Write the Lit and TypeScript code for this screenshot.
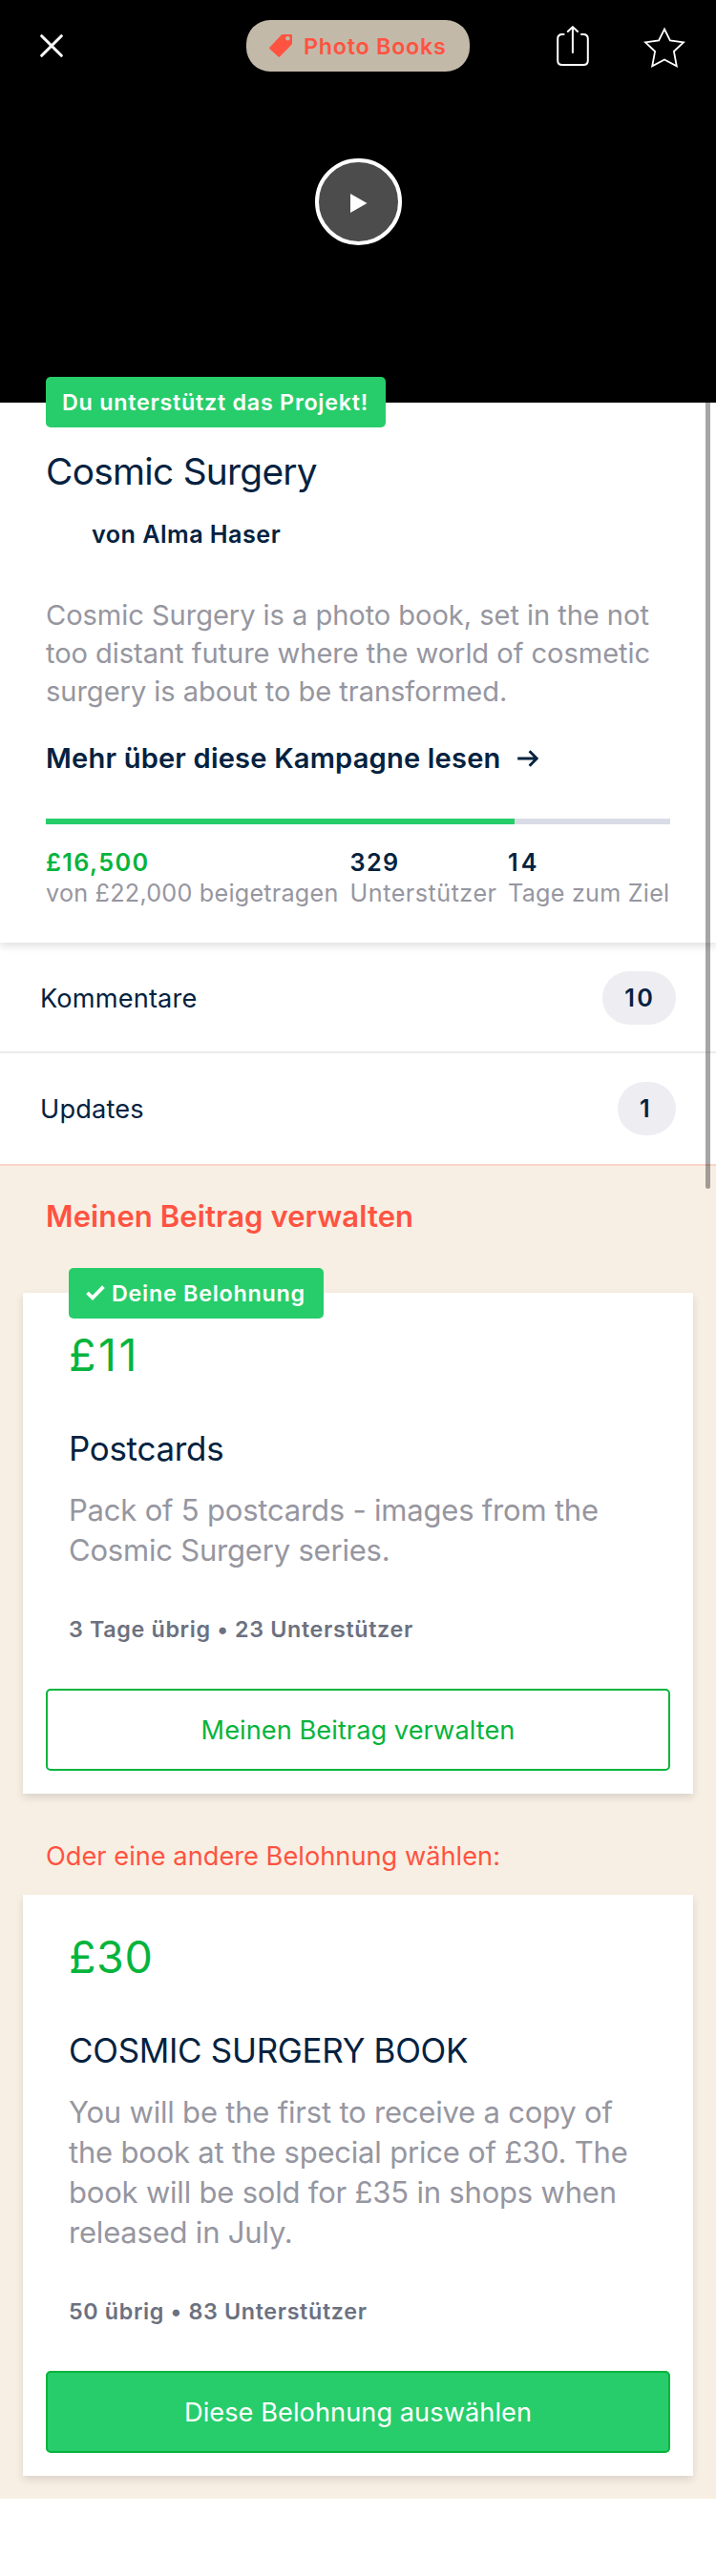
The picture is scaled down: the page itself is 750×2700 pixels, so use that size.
import { LitElement, html, css, svg, nothing } from "lit";
import { customElement, property } from "lit/decorators.js";
import { classMap } from "lit/directives/class-map.js";

const closeIcon = html`<svg class="icon" width="24" height="24" viewBox="0 0 24 24">
  ${svg`<path d="M1.7 1.7 22.3 22.3M22.3 1.7 1.7 22.3" fill="none" stroke="#fff" stroke-width="3" stroke-linecap="round" />`}
</svg>`;

const tagIcon = html`<svg class="icon" width="24" height="24" viewBox="0 0 24 24">
  ${svg`<path fill="#ff5341" fill-rule="evenodd"
    d="M14 .1H23a1 1 0 0 1 1 1V9.6q0 .7-.5 1.2L11 23.5q-.7.7-1.4 0L.4 15.2q-.7-.7 0-1.4L12.8.6Q13.3.1 14 .1ZM19.4 2a2.3 2.3 0 1 0 0 4.6 2.3 2.3 0 0 0 0-4.6Z" />`}
</svg>`;

const shareIcon = html`<svg class="icon" width="34" height="42" viewBox="0 0 34 42">
  ${svg`<g fill="none" stroke="#fff" stroke-width="2" stroke-linecap="round" stroke-linejoin="round">
    <path d="M7.6 9H6Q1.2 9 1.2 13.5V36.5Q1.2 41 6 41H28Q32.8 41 32.8 36.5V13.5Q32.8 9 28 9H26" />
    <path d="M16.9 28V1.2M11.8 6 16.9 1.1 22 6" />
  </g>`}
</svg>`;

const starIcon = html`<svg class="icon" width="44" height="44" viewBox="0 0 44 44">
  ${svg`<path fill="none" stroke="#fff" stroke-width="1.8"
    d="M22 3.5 27.9 15.5 42 17.4 31.9 26.9 34.8 42.3 22 35.4 9.2 42.3 12.1 26.9 2 17.4 16.1 15.5Z" />`}
</svg>`;

const arrowIcon = html`<svg class="arrow" width="22" height="18" viewBox="0 0 22 18">
  ${svg`<path d="M.2 9H20M12.6 1.2 20.3 9 12.6 16.8" fill="none" stroke="#042240" stroke-width="2.9" />`}
</svg>`;

const checkIcon = html`<svg class="icon" width="20" height="16" viewBox="0 0 20 16">
  ${svg`<path d="M1.5 8 7 13.3 18.4 1.7" fill="none" stroke="#fff" stroke-width="3.8" />`}
</svg>`;

interface Reward {
  price: string;
  narrowDigits?: boolean;
  title: string;
  lines: string[];
  meta: string;
  action: string;
  owned?: boolean;
}

const owned: Reward = {
  price: "£11",
  narrowDigits: true,
  title: "Postcards",
  lines: ["Pack of 5 postcards - images from the", "Cosmic Surgery series."],
  meta: "3 Tage übrig • 23 Unterstützer",
  action: "Meinen Beitrag verwalten",
  owned: true,
};

const alternative: Reward = {
  price: "£30",
  title: "COSMIC SURGERY BOOK",
  lines: [
    "You will be the first to receive a copy of",
    "the book at the special price of £30. The",
    "book will be sold for £35 in shops when",
    "released in July.",
  ],
  meta: "50 übrig • 83 Unterstützer",
  action: "Diese Belohnung auswählen",
};

const badgeStyles = css`
  .icon { display: block; flex: none; }
  .badge {
    display: inline-flex;
    align-items: center;
    height: 53px;
    padding: 0 18.5px 0 17px;
    box-sizing: border-box;
    border-radius: 5px;
    background: #27cd6a;
    color: #fff;
    font-size: 23.3px;
    font-weight: 600;
    letter-spacing: 0.75px;
    white-space: nowrap;
  }
`;

@customElement("reward-card")
class RewardCard extends LitElement {
  @property({ attribute: false }) reward!: Reward;

  static styles = [
    badgeStyles,
    css`
      :host { display: block; }
      .card {
        display: flex;
        flex-direction: column;
        background: #fff;
        padding: 37px 24px 24px;
        box-shadow: 0 4px 8px rgba(0, 0, 0, 0.12);
      }
      .card.owned { padding-top: 0; }
      .card .badge { align-self: flex-start; margin: -26px 0 10px 24px; gap: 7px; padding: 0 19px 0 18px; }
      .text { padding: 0 24px; white-space: nowrap; }
      .price { color: #05b43c; font-size: 46.6px; line-height: 56px; letter-spacing: 0.6px; }
      .price.narrow { letter-spacing: 2.5px; }
      .title { margin-top: 48.3px; font-size: 34.9px; line-height: 44px; letter-spacing: -0.27px; }
      .description { margin-top: 21.4px; font-size: 31px; line-height: 42px; letter-spacing: -0.2px; color: #9696a0; }
      .meta { margin-top: 47.5px; font-size: 23.3px; line-height: 30px; font-weight: 600; letter-spacing: 0.65px; color: #6b7180; }
      .action {
        margin: 46.8px 0 0;
        height: 86px;
        padding: 1px 0 0;
        box-sizing: border-box;
        border: 2px solid #05b43c;
        border-radius: 5px;
        background: #27cd6a;
        color: #fff;
        font: 400 27.2px Inter, "Liberation Sans", sans-serif;
        letter-spacing: 0.05px;
      }
      .owned .action { background: #fff; color: #05b43c; }
    `,
  ];

  render() {
    const r = this.reward;
    return html`<article class=${classMap({ card: true, owned: !!r.owned })}>
      ${r.owned ? html`<span class="badge">${checkIcon}<span>Deine Belohnung</span></span>` : nothing}
      <div class=${classMap({ text: true, price: true, narrow: !!r.narrowDigits })}>${r.price}</div>
      <div class="text title">${r.title}</div>
      <div class="text description">${r.lines.map((line) => html`<div>${line}</div>`)}</div>
      <div class="text meta">${r.meta}</div>
      <button class="action">${r.action}</button>
    </article>`;
  }
}

@customElement("app-root")
class AppRoot extends LitElement {
  static styles = [
    badgeStyles,
    css`
      :host {
        display: block;
        position: relative;
        min-height: 2700px;
        background: #fff;
        color: #042240;
        font-family: Inter, "Liberation Sans", sans-serif;
      }
      .hero { height: 422px; background: #000; display: flex; flex-direction: column; align-items: center; }
      .bar { width: 100%; height: 96px; display: grid; grid-template-columns: 258px 234px 258px; align-items: center; }
      .close { padding-left: 42px; }
      .category {
        display: flex;
        align-items: center;
        gap: 12px;
        height: 54px;
        padding-left: 24px;
        box-sizing: border-box;
        border-radius: 25px;
        background: #c3b9a9;
        color: #ff5341;
        font-size: 23.3px;
        font-weight: 600;
        letter-spacing: 0.75px;
        white-space: nowrap;
      }
      .actions { display: flex; justify-content: flex-end; align-items: center; gap: 57px; padding-right: 32px; }
      .actions .icon { margin-top: -1px; }
      .actions .icon:last-child { margin-top: 1px; }
      .play {
        display: flex;
        align-items: center;
        justify-content: center;
        width: 91px;
        height: 91px;
        margin-top: 70px;
        box-sizing: border-box;
        border: 4px solid #fff;
        border-radius: 50%;
        background: #4c4c4c;
      }
      .play svg { display: block; margin: 2px 0 0 2px; }
      .campaign { position: relative; padding: 0 48px 36px; box-shadow: 0 4px 8px rgba(0, 0, 0, 0.12); display: flex; flex-direction: column; white-space: nowrap; }
      .campaign .badge { align-self: flex-start; margin-top: -27px; }
      .name { margin-top: 21.6px; font-size: 38.8px; line-height: 48px; letter-spacing: -0.7px; }
      .author { margin: 26.2px 0 0 48px; font-size: 25.2px; line-height: 32px; font-weight: 600; letter-spacing: 0.45px; }
      .blurb { margin-top: 49.2px; font-size: 29.1px; line-height: 40px; letter-spacing: -0.06px; color: #9696a0; }
      .more { display: flex; align-items: center; gap: 17px; margin-top: 29.6px; font-size: 29.1px; line-height: 40px; font-weight: 600; letter-spacing: 0.18px; }
      .arrow { display: block; margin-top: 1px; }
      .track { height: 6px; margin-top: 43.4px; background: #d9dce6; }
      .fill { height: 6px; background: #27cd6a; }
      .stats { display: grid; grid-template-columns: 318.6px 165.5px auto; margin-top: 24px; font-size: 25.2px; line-height: 32px; }
      .value { font-weight: 600; letter-spacing: 1.4px; }
      .value.narrow { letter-spacing: 2.9px; }
      .value.raised { color: #05b43c; }
      .label { letter-spacing: 0.22px; color: #9696a0; }
      .label.wide { letter-spacing: 0.48px; }
      .row { display: flex; align-items: center; justify-content: space-between; height: 116px; padding: 0 42px; box-sizing: border-box; font-size: 27.2px; letter-spacing: 0.15px; }
      .row-label { padding-top: 1px; }
      .row:first-child { box-shadow: inset 0 -2px #ebebed; }
      .count {
        display: flex;
        align-items: center;
        height: 56px;
        min-width: 61.5px;
        padding: 0 21.5px 0 23.5px;
        box-sizing: border-box;
        border-radius: 28px;
        background: #eeedf2;
        font-size: 25.2px;
        font-weight: 600;
        letter-spacing: 2.5px;
      }
      .manage { border-top: 2px solid #fad4c6; background: #f8efe4; padding: 32.7px 24px 24px; color: #ff5341; }
      .heading { padding: 0 24px; font-size: 31px; line-height: 40px; font-weight: 600; letter-spacing: 0.1px; }
      .other { padding: 0 24px; margin: 48px 0 22px; font-size: 27.2px; line-height: 36px; letter-spacing: 0.02px; }
      reward-card { color: #042240; }
      .heading + reward-card { margin-top: 60.3px; }
      .scrollbar { position: absolute; top: 422px; right: 6px; width: 5px; height: 824px; border-radius: 0 0 3px 3px; background: rgba(0, 0, 0, 0.35); }
    `,
  ];

  private raised = 16500;
  private goal = 22000;

  render() {
    return html`
      <header class="hero">
        <nav class="bar">
          <span class="close">${closeIcon}</span>
          <span class="category">${tagIcon}<span>Photo Books</span></span>
          <span class="actions">${shareIcon}${starIcon}</span>
        </nav>
        <div class="play">
          <svg width="18" height="20" viewBox="0 0 18 20"><path d="M0 0 17.5 10 0 20Z" fill="#fff" /></svg>
        </div>
      </header>
      <section class="campaign">
        <span class="badge">Du unterstützt das Projekt!</span>
        <div class="name">Cosmic Surgery</div>
        <div class="author">von Alma Haser</div>
        <div class="blurb">
          Cosmic Surgery is a photo book, set in the not<br />
          too distant future where the world of cosmetic<br />
          surgery is about to be transformed.
        </div>
        <div class="more"><span>Mehr über diese Kampagne lesen</span>${arrowIcon}</div>
        <div class="track"><div class="fill" style="width:${(this.raised / this.goal) * 100}%"></div></div>
        <div class="stats">
          <div><div class="value raised">£16,500</div><div class="label">von £22,000 beigetragen</div></div>
          <div><div class="value">329</div><div class="label wide">Unterstützer</div></div>
          <div><div class="value narrow">14</div><div class="label">Tage zum Ziel</div></div>
        </div>
      </section>
      <section>
        <div class="row"><span class="row-label">Kommentare</span><span class="count">10</span></div>
        <div class="row"><span class="row-label">Updates</span><span class="count">1</span></div>
      </section>
      <section class="manage">
        <div class="heading">Meinen Beitrag verwalten</div>
        <reward-card .reward=${owned}></reward-card>
        <div class="other">Oder eine andere Belohnung wählen:</div>
        <reward-card .reward=${alternative}></reward-card>
      </section>
      <div class="scrollbar"></div>
    `;
  }
}
